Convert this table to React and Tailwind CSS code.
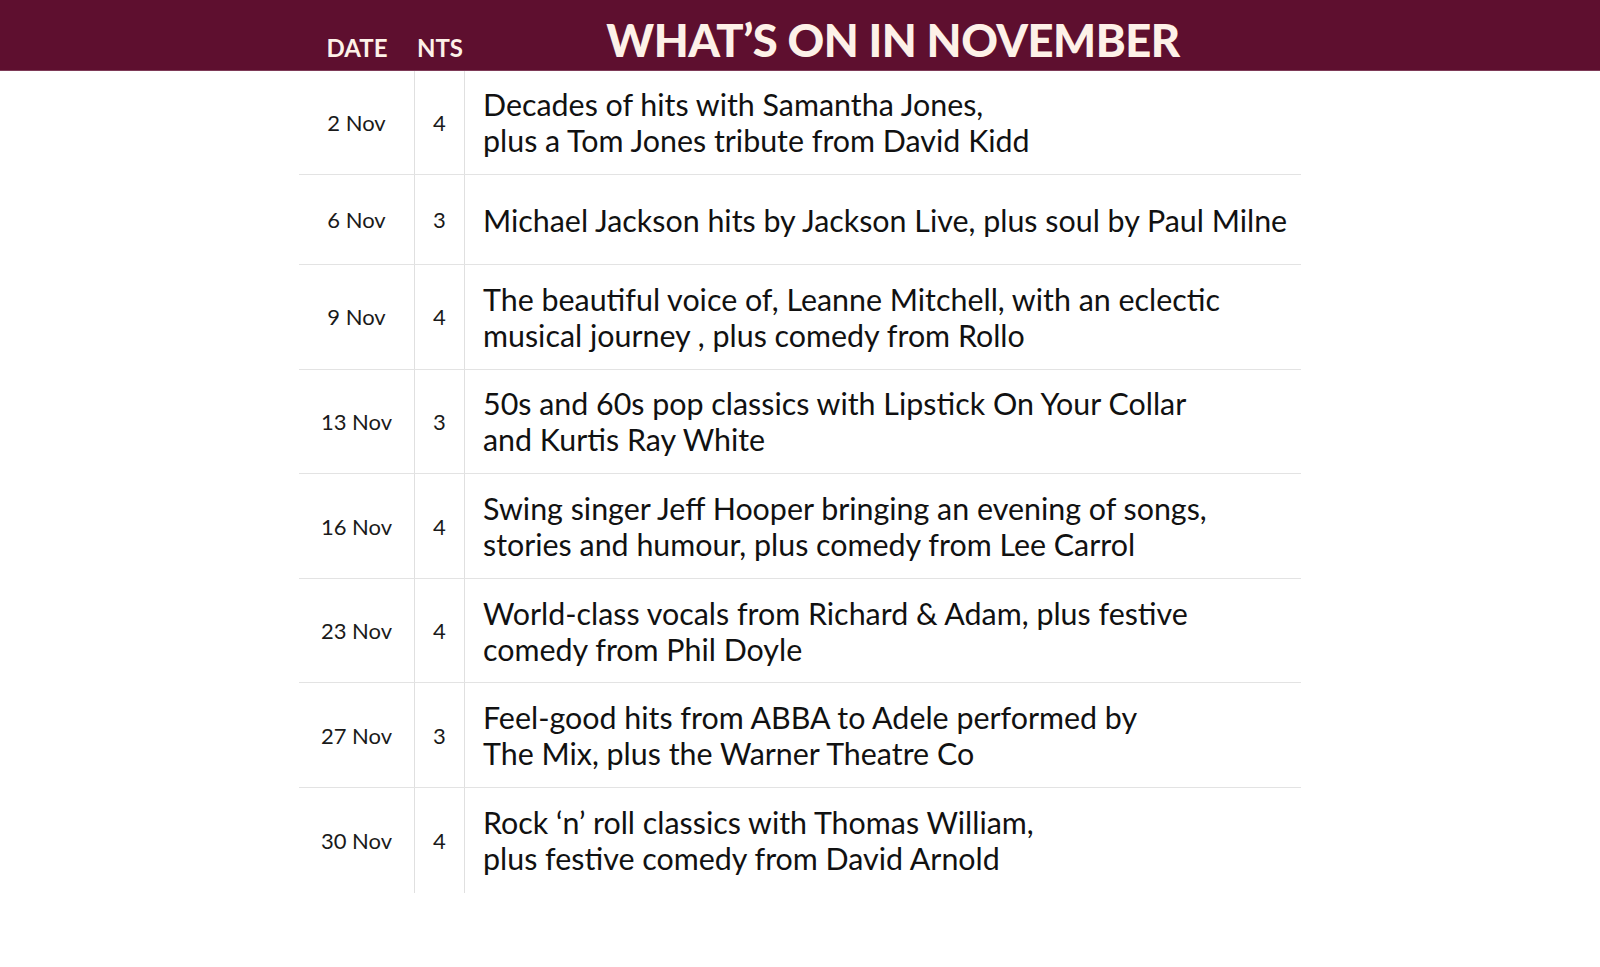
const events = [
  { date: "2 Nov", nts: 4, lines: ["Decades of hits with Samantha Jones,", "plus a Tom Jones tribute from David Kidd"] },
  { date: "6 Nov", nts: 3, lines: ["Michael Jackson hits by Jackson Live, plus soul by Paul Milne"] },
  { date: "9 Nov", nts: 4, lines: ["The beautiful voice of, Leanne Mitchell, with an eclectic", "musical journey , plus comedy from Rollo"] },
  { date: "13 Nov", nts: 3, lines: ["50s and 60s pop classics with Lipstick On Your Collar", "and Kurtis Ray White"] },
  { date: "16 Nov", nts: 4, lines: ["Swing singer Jeff Hooper bringing an evening of songs,", "stories and humour, plus comedy from Lee Carrol"] },
  { date: "23 Nov", nts: 4, lines: ["World-class vocals from Richard & Adam, plus festive", "comedy from Phil Doyle"] },
  { date: "27 Nov", nts: 3, lines: ["Feel-good hits from ABBA to Adele performed by", "The Mix, plus the Warner Theatre Co"] },
  { date: "30 Nov", nts: 4, lines: ["Rock \u2018n\u2019 roll classics with Thomas William,", "plus festive comedy from David Arnold"] },
];

function Row({ event, last }) {
  const single = event.lines.length === 1;
  return (
    <div className={`flex ${single ? "h-[90px]" : "h-[104.6px]"} ${last ? "" : "border-b border-[#e3e3e3]"}`}>
      <div className="w-[116px] flex items-center justify-center text-[22px] text-[#1a1a1a] border-r border-[#e0e0e0]">
        {event.date}
      </div>
      <div className="w-[50px] flex items-center justify-center text-[22px] text-[#1a1a1a] border-r border-[#e0e0e0]">
        {event.nts}
      </div>
      <div className="flex-1 flex flex-col justify-center pl-[18px] text-[30.4px] leading-[36px] text-[#111]">
        {event.lines.map((l, i) => (
          <div key={i} className="whitespace-nowrap">{l}</div>
        ))}
      </div>
    </div>
  );
}

export default function App() {
  return (
    <div className="w-[1600px] h-[967px] bg-white" style={{ fontFamily: "Lato, 'Noto Sans', sans-serif" }}>
      <div className="h-[70.5px] bg-[#5e0f2f] border-b border-[#7e3a57]">
        <div className="ml-[299px] w-[1002px] h-full flex items-end pb-[10px]">
          <div className="w-[116px] text-center text-[24px] font-bold text-[#fdf1e8] leading-none">DATE</div>
          <div className="w-[50px] text-center text-[24px] font-bold text-[#fdf1e8] leading-none">NTS</div>
          <div className="flex-1 text-center text-[45.3px] font-black tracking-[-0.5px] text-[#fdf1e8] leading-none -mb-[3px] pl-[20px]">
            WHAT&rsquo;S ON IN NOVEMBER
          </div>
        </div>
      </div>
      <div className="ml-[299px] w-[1002px]">
        {events.map((e, i) => (
          <Row key={i} event={e} last={i === events.length - 1} />
        ))}
      </div>
    </div>
  );
}
